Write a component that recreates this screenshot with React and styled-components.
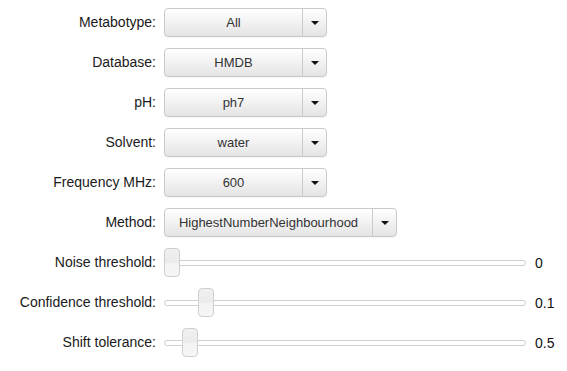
import React from "react";
import styled, { createGlobalStyle } from "styled-components";

const Global = createGlobalStyle`
  html, body { margin: 0; padding: 0; background: #fff; }
  body { font-family: "Liberation Sans", Arial, sans-serif; font-size: 13px; color: #222; }
`;

const Form = styled.div`
  display: grid;
  grid-template-columns: 156px auto;
  column-gap: 8px;
  row-gap: 11px;
  padding-top: 8px;
  align-items: center;
  justify-items: start;
`;

const Label = styled.div`
  justify-self: end;
  text-align: right;
  white-space: nowrap;
  line-height: 29px;
  font-size: 14px;
  color: #1a1a1a;
`;

const Split = styled.div`
  display: inline-flex;
  height: 29px;
  border-radius: 4px;
  box-shadow: 0 1px 1px rgba(0, 0, 0, 0.04);
`;

const btn = `
  box-sizing: border-box;
  height: 29px;
  border: 1px solid #cacaca;
  background: linear-gradient(to bottom, #ffffff 0%, #e4e4e4 100%);
  font-family: "Liberation Sans", Arial, sans-serif;
  font-size: 13px;
  color: #333;
  display: flex;
  align-items: center;
  justify-content: center;
  padding: 0;
`;

const Main = styled.div`
  ${btn}
  width: ${(p) => p.$w}px;
  border-radius: 4px 0 0 4px;
  white-space: nowrap;
`;

const CaretBtn = styled.div`
  ${btn}
  width: 25px;
  margin-left: -1px;
  border-radius: 0 4px 4px 0;
`;

const Caret = styled.span`
  width: 0;
  height: 0;
  border-top: 4px solid #111;
  border-left: 4px solid transparent;
  border-right: 4px solid transparent;
`;

const SliderRow = styled.div`
  display: flex;
  align-items: center;
  gap: 9px;
  height: 29px;
`;

const Track = styled.div`
  position: relative;
  width: 362px;
  height: 29px;
  display: flex;
  align-items: center;
`;

const Rail = styled.div`
  box-sizing: border-box;
  width: 100%;
  height: 6px;
  border: 1px solid #cfcfcf;
  border-radius: 3px;
  background: #fff;
`;

const Handle = styled.div`
  position: absolute;
  top: 0;
  box-sizing: border-box;
  width: 16px;
  height: 29px;
  border: 1px solid #cfcfcf;
  border-radius: 4px;
  background: linear-gradient(to bottom, #f0f0f0 0%, #ebebeb 50%, #f3f3f3 51%, #f6f6f6 100%);
`;

const Value = styled.span`
  color: #111;
  font-size: 14px;
`;

const selects = [
  { label: "Metabotype:", value: "All", w: 139 },
  { label: "Database:", value: "HMDB", w: 139 },
  { label: "pH:", value: "ph7", w: 139 },
  { label: "Solvent:", value: "water", w: 139 },
  { label: "Frequency MHz:", value: "600", w: 139 },
  { label: "Method:", value: "HighestNumberNeighbourhood", w: 209 },
];

const sliders = [
  { label: "Noise threshold:", value: "0", pos: 0 },
  { label: "Confidence threshold:", value: "0.1", pos: 34 },
  { label: "Shift tolerance:", value: "0.5", pos: 18 },
];

export default function App() {
  return (
    <>
      <Global />
      <Form>
        {selects.map((s) => (
          <React.Fragment key={s.label}>
            <Label>{s.label}</Label>
            <Split>
              <Main $w={s.w}>{s.value}</Main>
              <CaretBtn>
                <Caret />
              </CaretBtn>
            </Split>
          </React.Fragment>
        ))}
        {sliders.map((s) => (
          <React.Fragment key={s.label}>
            <Label>{s.label}</Label>
            <SliderRow>
              <Track>
                <Rail />
                <Handle style={{ left: s.pos }} />
              </Track>
              <Value>{s.value}</Value>
            </SliderRow>
          </React.Fragment>
        ))}
      </Form>
    </>
  );
}
